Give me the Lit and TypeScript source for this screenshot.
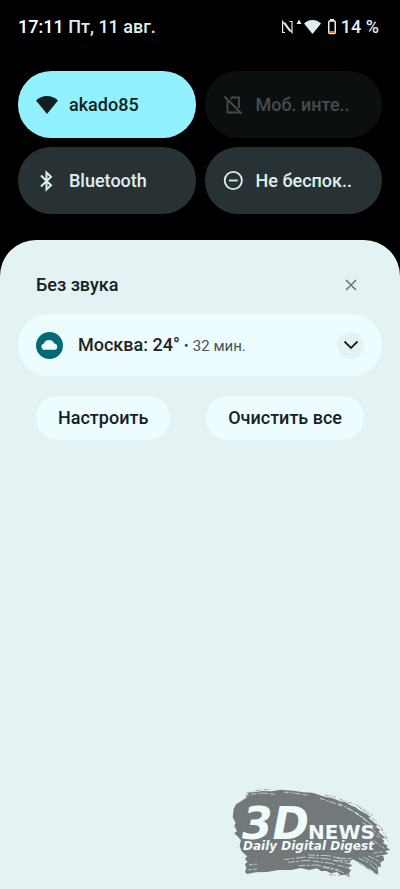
import { LitElement, html, svg, css } from "lit";
import { customElement, property } from "lit/decorators.js";

const icons = {
  wifi: svg`<svg viewBox="0 0 24 24" width="24" height="24" aria-hidden="true">
    <path fill="currentColor" d="M12 21 1 7.600C4 4.600 7.800 3 12 3s8 1.600 11 4.600z"/></svg>`,
  simOff: svg`<svg viewBox="0 0 24 24" width="24" height="24" aria-hidden="true" fill="none" stroke="currentColor" stroke-width="1.800">
    <path d="M2.500 3.500 19.500 20.500M5.500 8v11.500h12M8.500 6.200 10.200 4.500H17V15"/></svg>`,
  bluetooth: svg`<svg viewBox="0 0 24 24" width="24" height="24" aria-hidden="true" fill="none" stroke="currentColor" stroke-width="2">
    <path d="M6 6.500 16 16.300l-4.500 4.200V3.500L16 7.700 6 17.500"/></svg>`,
  dnd: svg`<svg viewBox="0 0 24 24" width="24" height="24" aria-hidden="true" fill="none" stroke="currentColor" stroke-width="1.800">
    <circle cx="11.300" cy="11.500" r="8.600"/><path d="M6.900 11.500h8.800"/></svg>`,
};

@customElement("quick-tile")
class QuickTile extends LitElement {
  @property() icon: keyof typeof icons = "wifi";
  @property() label = "";
  @property() mode = "off";

  static styles = css`
    :host { display: block; min-width: 0; }
    button {
      display: flex; align-items: center; gap: 10px;
      width: 100%; height: 67px; padding: 0 17px; border: 0; border-radius: 33px;
      font: 500 18px/24px Roboto, sans-serif; text-align: left; white-space: nowrap;
      background: #283234; color: #dfeff1;
    }
    .on { background: #92f1ff; color: #121e20; }
    .disabled { background: #0b0f10; color: #464c4d; }
    svg { display: block; flex: none; }
  `;

  render() {
    return html`<button class=${this.mode} ?disabled=${this.mode === "disabled"}
      aria-pressed=${this.mode === "on"}>${icons[this.icon]}<span>${this.label}</span></button>`;
  }
}

@customElement("brand-mark")
class BrandMark extends LitElement {
  static styles = css`
    :host { display: block; }
    svg { display: block; }
    text { fill: #f0fbfc; font-family: "DejaVu Sans", sans-serif; font-weight: 700; }
    .big { font-size: 44px; font-style: italic; }
    .news { font-size: 20px; }
    .tag { font-size: 12px; font-style: italic; }
  `;

  render() {
    return html`<svg width="175" height="109" viewBox="0 0 175 109" role="img" aria-label="3DNews">
      <svg width="175" height="109" viewBox="0 0 525 327">
        <path fill="#73797a" d="M26 86 34 72 48 64 66 52 60 45 72 47 66 38 92 36 110 33 140 34 166 29 204 32 236 37 262 38 300 50 322 54 345 64 362 67 376 76 392 82 403 91 420 100 437 112 430 113 450 130 459 137 450 138 466 151 460 155 484 176 472 173 478 186 472 188 488 197 484 202 496 210 480 213 490 221 474 226 478 240 466 248 468 260 458 262 460 285 444 274 436 268 424 262 412 253 396 244 382 238 372 251 382 256 368 264 378 270 372 280 374 292 360 284 348 286 336 276 318 280 304 273 288 273 276 265 252 270 226 264 200 270 160 270 126 276 92 277 66 282 60 276 64 265 60 252 68 246 60 238 66 229 50 214 44 197 48 180 34 166 28 160 36 154 28 138 32 128 23 112z"/>
        <g fill="none" stroke="#e4f2f3" stroke-width="2">
          <path d="M78 43 112 39 150 43M176 36 222 41 252 47M285 55 322 67 350 78M340 70 382 91 414 112M366 84 400 105 438 133M390 96 421 118 452 145M412 126 446 151 474 179M437 157 463 174M446 182 478 205" stroke-dasharray="15 5 6 3 22 6"/>
          <path d="M176 239 240 231 310 237 374 252M190 247 246 241 312 249 370 263M222 257 276 255 340 269M250 225 310 227 354 237M292 261 346 274 372 286M400 234 431 248 458 273M415 231 446 248 464 264M430 228 466 246" stroke-dasharray="20 4 8 5 30 7"/>
          <path d="M326 242 386 243M336 234 382 236M452 229 482 225M446 219 476 215M72 255 96 252M68 270 96 267" stroke-dasharray="12 4"/>
        </g>
        <g fill="none" stroke="#73797a" stroke-width="2" stroke-dasharray="12 4 4 6">
          <path d="M344 58 394 74 442 106M402 81 447 119 474 151M300 45 332 51M468 143 490 182M380 232 416 259 455 282M312 284 345 286M66 42 96 31 138 28"/>
        </g>
      </svg>
      <text class="big" x="17" y="59">3D</text>
      <text class="news" x="83" y="59">NEWS</text>
      <text class="tag" x="18" y="70">Daily Digital Digest</text>
    </svg>`;
  }
}

@customElement("app-root")
class AppRoot extends LitElement {
  static styles = css`
    :host {
      display: flex; flex-direction: column; position: relative; box-sizing: border-box;
      min-height: 100vh; background: #000; color: #152123;
      font: 500 18px/24px Roboto, sans-serif;
    }
    svg { display: block; flex: none; }
    button { font: inherit; color: inherit; border: 0; padding: 0; }
    .status {
      display: flex; align-items: center; justify-content: space-between;
      padding: 15px 21px 0 18px; color: #dfeff1; white-space: nowrap;
    }
    .time { color: #fff; }
    .indicators { display: flex; align-items: center; gap: 4px; }
    .tiles {
      display: grid; grid-template-columns: 1fr 1fr; gap: 9px;
      padding: 32px 18px 26px;
    }
    .panel {
      flex: 1; padding: 27px 18px 18px; background: #e4f2f3;
      border-radius: 36px 36px 0 0;
    }
    .head { display: flex; align-items: center; justify-content: space-between; padding: 0 18px; height: 36px; }
    h2 { margin: 0; font: inherit; }
    .close { display: grid; place-items: center; width: 27px; height: 27px; background: none; color: #697374; }
    .card {
      display: flex; align-items: center; height: 62px; margin-top: 11px; padding: 0 18px;
      background: #edfdff; border-radius: 31px; white-space: nowrap;
    }
    .line { display: flex; align-items: baseline; flex: 1; margin-left: 15px; }
    .title { color: #202426; }
    .dot, .ago { font-size: 15px; font-weight: 400; color: #465254; }
    .dot { margin: 0 4px; }
    .expand { display: grid; place-items: center; width: 27px; height: 27px; border-radius: 50%; background: #e4f2f3; }
    .actions { display: flex; justify-content: space-between; padding: 20px 18px 0; }
    .pill { height: 44px; padding: 0 22px; border-radius: 22px; background: #edfdff; }
    brand-mark { position: absolute; right: 0; bottom: 0; }
  `;

  render() {
    return html`
      <header class="status">
        <div><span class="time">17:11</span> <span>Пт, 11 авг.</span></div>
        <div class="indicators">
          <svg width="42" height="18" viewBox="0 0 42 18" aria-hidden="true">
            <path fill="none" stroke="currentColor" stroke-width="1.200" d="M4 14.500H1.600V3.500L9 13.500M3.600 4.500 11 14.500V3.500H8.600"/>
            <path fill="currentColor" d="M15.500 6 18 1.500 20.500 6zM31.500 16 23 5.500C25.500 3 28.500 2 31.500 2S37.500 3 40 5.500z"/>
          </svg>
          <svg width="10" height="18" viewBox="0 0 10 18" aria-hidden="true">
            <path fill="currentColor" d="M3 1h4v2H3z"/>
            <rect x="1.750" y="3" width="6.500" height="12.500" rx="1" fill="none" stroke="currentColor" stroke-width="1.500"/>
            <path fill="#f46a45" d="M2 13h6v2H2z"/>
          </svg>
          <span>14 %</span>
        </div>
      </header>
      <section class="tiles">
        <quick-tile icon="wifi" label="akado85" mode="on"></quick-tile>
        <quick-tile icon="simOff" label="Моб. инте.." mode="disabled"></quick-tile>
        <quick-tile icon="bluetooth" label="Bluetooth"></quick-tile>
        <quick-tile icon="dnd" label="Не беспок.."></quick-tile>
      </section>
      <main class="panel">
        <div class="head">
          <h2>Без звука</h2>
          <button class="close" aria-label="Закрыть">
            <svg width="12" height="12" viewBox="0 0 12 12"><path d="M1 1l10 10M11 1 1 11" stroke="currentColor" stroke-width="1.500"/></svg>
          </button>
        </div>
        <article class="card">
          <svg width="27" height="27" viewBox="0 0 27 27" aria-hidden="true">
            <circle cx="13.500" cy="13.500" r="13.500" fill="#036a75"/>
            <path fill="#edfdff" d="M8.500 17.800a3.200 3.200 0 0 1-.6-6.300 5.600 5.600 0 0 1 10.300 0A3.200 3.200 0 0 1 18.800 17.800z"/>
          </svg>
          <div class="line">
            <span class="title">Москва: 24°</span><span class="dot">•</span><span class="ago">32 мин.</span>
          </div>
          <button class="expand" aria-label="Развернуть">
            <svg width="16" height="10" viewBox="0 0 16 10"><path d="M1.500 1.500 8 8l6.500-6.500" fill="none" stroke="currentColor" stroke-width="1.800"/></svg>
          </button>
        </article>
        <div class="actions">
          <button class="pill">Настроить</button>
          <button class="pill">Очистить все</button>
        </div>
      </main>
      <brand-mark></brand-mark>
    `;
  }
}
